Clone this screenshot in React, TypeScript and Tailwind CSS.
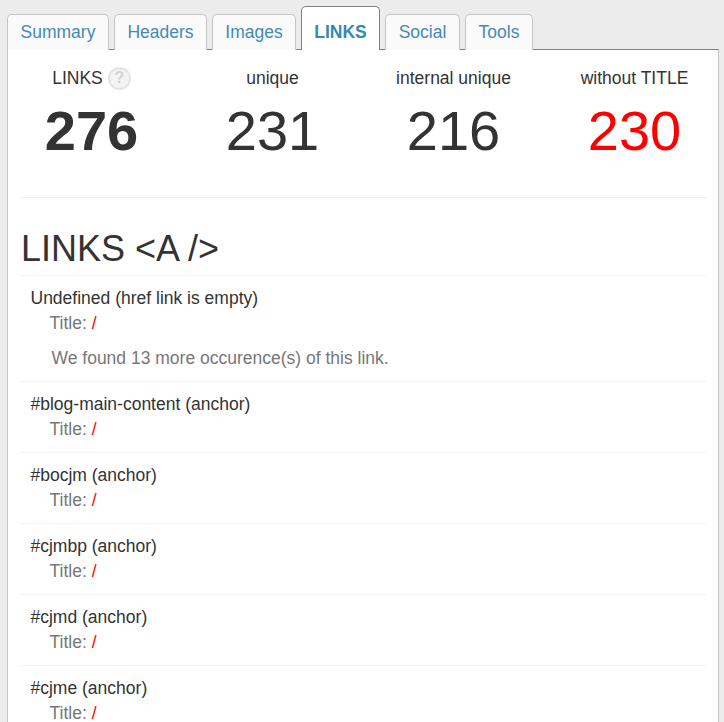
const tabs = [
  { label: "Summary", width: "w-[102px]" },
  { label: "Headers", width: "w-[93px]" },
  { label: "Images", width: "w-[84px]" },
];
const tabsAfter = [
  { label: "Social", width: "w-[75px]" },
  { label: "Tools", width: "w-[68px]" },
];

function Tab({ label, width }: { label: string; width: string }) {
  return (
    <div className={`${width} h-[36px] flex items-center justify-center rounded-t-[5px] border border-b-0 border-[#c5c5c5] bg-[#fafafa] text-[17.5px] text-[#428bb5]`}>
      {label}
    </div>
  );
}

function Stat({ label, value, className, help }: { label: string; value: string; className: string; help?: boolean }) {
  return (
    <div className="w-[181px] flex flex-col items-center">
      <div className="h-[24px] flex items-center gap-[5px] text-[17.5px] leading-[24px] text-[#333]">
        {label}
        {help && (
          <span className="w-[23px] h-[23px] rounded-full bg-[#f3f3f3] border-2 border-[#e4e4e4] flex items-center justify-center text-[16px] font-bold text-[#d4d4d4]">?</span>
        )}
      </div>
      <div className={`mt-[9px] h-[64px] leading-[64px] text-[56px] ${className}`}>{value}</div>
    </div>
  );
}

function LinkRow({ name, note }: { name: string; note?: string }) {
  return (
    <div className={`border-t border-[#f0f3f8] pl-[10.5px] pt-[10px] ${note ? "h-[106px]" : "h-[71px]"}`}>
      <div className="text-[17.5px] leading-[24px] text-[#333]">{name}</div>
      <div className="pl-[19px] mt-px text-[17.5px] leading-[24px] text-[#777]">
        Title: <span className="text-[#f00]">/</span>
      </div>
      {note && <div className="pl-[21px] mt-[11px] text-[17.5px] leading-[24px] text-[#777]">{note}</div>}
    </div>
  );
}

export default function App() {
  return (
    <div className="h-[722px] overflow-hidden bg-[#ececec] pl-[7px] pr-[5px] pt-[6px] font-['Liberation_Sans',Arial,sans-serif]">
      <div className="flex items-end gap-[5px] relative z-10 h-[44px]">
        {tabs.map((t) => <Tab key={t.label} {...t} />)}
        <div className="w-[79px] h-[44px] flex items-center justify-center rounded-t-[5px] border border-b-0 border-[#808080] bg-white text-[17.5px] font-bold text-[#358ab3] pt-[7px]">
          LINKS
        </div>
        {tabsAfter.map((t) => <Tab key={t.label} {...t} />)}
      </div>
      <div className="border-t border-x border-t-[#808080] border-x-[#c4c4c4] -mt-px bg-white h-[680px] px-[12px] pt-[16px] relative">
        <div className="-mx-[19px] flex">
          <Stat label="LINKS" value="276" className="font-bold text-[#333]" help />
          <Stat label="unique" value="231" className="text-[#333]" />
          <Stat label="internal unique" value="216" className="text-[#333]" />
          <Stat label="without TITLE" value="230" className="text-[#f00]" />
        </div>
        <div className="mt-[34px] border-t border-[#eeeeee]" />
        <div className="mt-[29px] h-[48px] leading-[44px] text-[36px] text-[#333] pl-px">LINKS &lt;A /&gt;</div>
        <LinkRow name="Undefined (href link is empty)" note="We found 13 more occurence(s) of this link." />
        <LinkRow name="#blog-main-content (anchor)" />
        <LinkRow name="#bocjm (anchor)" />
        <LinkRow name="#cjmbp (anchor)" />
        <LinkRow name="#cjmd (anchor)" />
        <LinkRow name="#cjme (anchor)" />
      </div>
    </div>
  );
}
